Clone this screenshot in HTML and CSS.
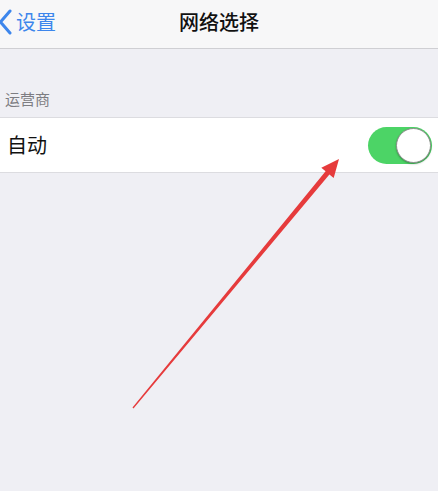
FILE: index.html
```html
<!DOCTYPE html>
<html lang="zh">
<head>
<meta charset="utf-8">
<link rel="stylesheet" href="styles.css">
</head>
<body>
<div class="screen">
  <header class="nav">
    <div class="back">
      <svg class="chev" width="14" height="26" viewBox="0 0 14 26"><path d="M12 2 L2.5 13 L12 24" fill="none" stroke="#3d86ec" stroke-width="3" stroke-linecap="round" stroke-linejoin="round"/></svg>
      <span class="back-text">设置</span>
    </div>
    <div class="title">网络选择</div>
  </header>
  <div class="section-header">运营商</div>
  <div class="row">
    <span class="label">自动</span>
    <div class="toggle"><div class="knob"></div></div>
  </div>
  <svg class="arrow" width="438" height="491" viewBox="0 0 438 491">
    <polygon points="339,159 333.7,178 329.4,174.5 133.5,408.4 132.5,407.6 325.6,171.3 321.3,167.8" fill="#e63b3c"/>
  </svg>
</div>
</body>
</html>
```
FILE: styles.css
```css
html, body {
  margin: 0;
  padding: 0;
}
body {
  background: #efeff4;
  font-family: "Noto Sans CJK SC", "Noto Sans", sans-serif;
  width: 438px;
  height: 491px;
  overflow: hidden;
}
.screen {
  position: relative;
  width: 438px;
  height: 491px;
}
.nav {
  height: 48px;
  background: #f7f7f8;
  border-bottom: 1px solid #cfcfd3;
  display: flex;
  align-items: center;
  position: relative;
}
.back {
  display: flex;
  align-items: center;
  gap: 4px;
  margin-left: -2px;
  margin-top: -4px;
}
.back-text {
  color: #3d86ec;
  font-size: 20px;
  line-height: 24px;
}
.title {
  position: absolute;
  left: 0;
  right: 0;
  top: 0;
  height: 44px;
  line-height: 44px;
  text-align: center;
  font-size: 20px;
  font-weight: 500;
  color: #111;
  pointer-events: none;
}
.section-header {
  height: 68px;
  box-sizing: border-box;
  padding: 0 0 8px 5px;
  display: flex;
  align-items: flex-end;
  color: #7d7d82;
  font-size: 15px;
  line-height: 20px;
}
.row {
  height: 54px;
  background: #fff;
  border-top: 1px solid #dcdce0;
  border-bottom: 1px solid #dcdce0;
  display: flex;
  align-items: center;
  justify-content: space-between;
  padding: 0 6px 0 7px;
}
.label {
  font-size: 20px;
  color: #111;
  line-height: 24px;
}
.toggle {
  width: 64px;
  height: 37px;
  border-radius: 19px;
  background: #4cd466;
  position: relative;
  box-sizing: border-box;
}
.knob {
  position: absolute;
  right: 1px;
  top: 1px;
  width: 35px;
  height: 35px;
  box-sizing: border-box;
  border-radius: 50%;
  background: #fff;
  border: 1px solid #8a8f8a;
  box-shadow: 0 1px 2px rgba(0,0,0,0.3);
}
.arrow {
  position: absolute;
  left: 0;
  top: 0;
}
```
